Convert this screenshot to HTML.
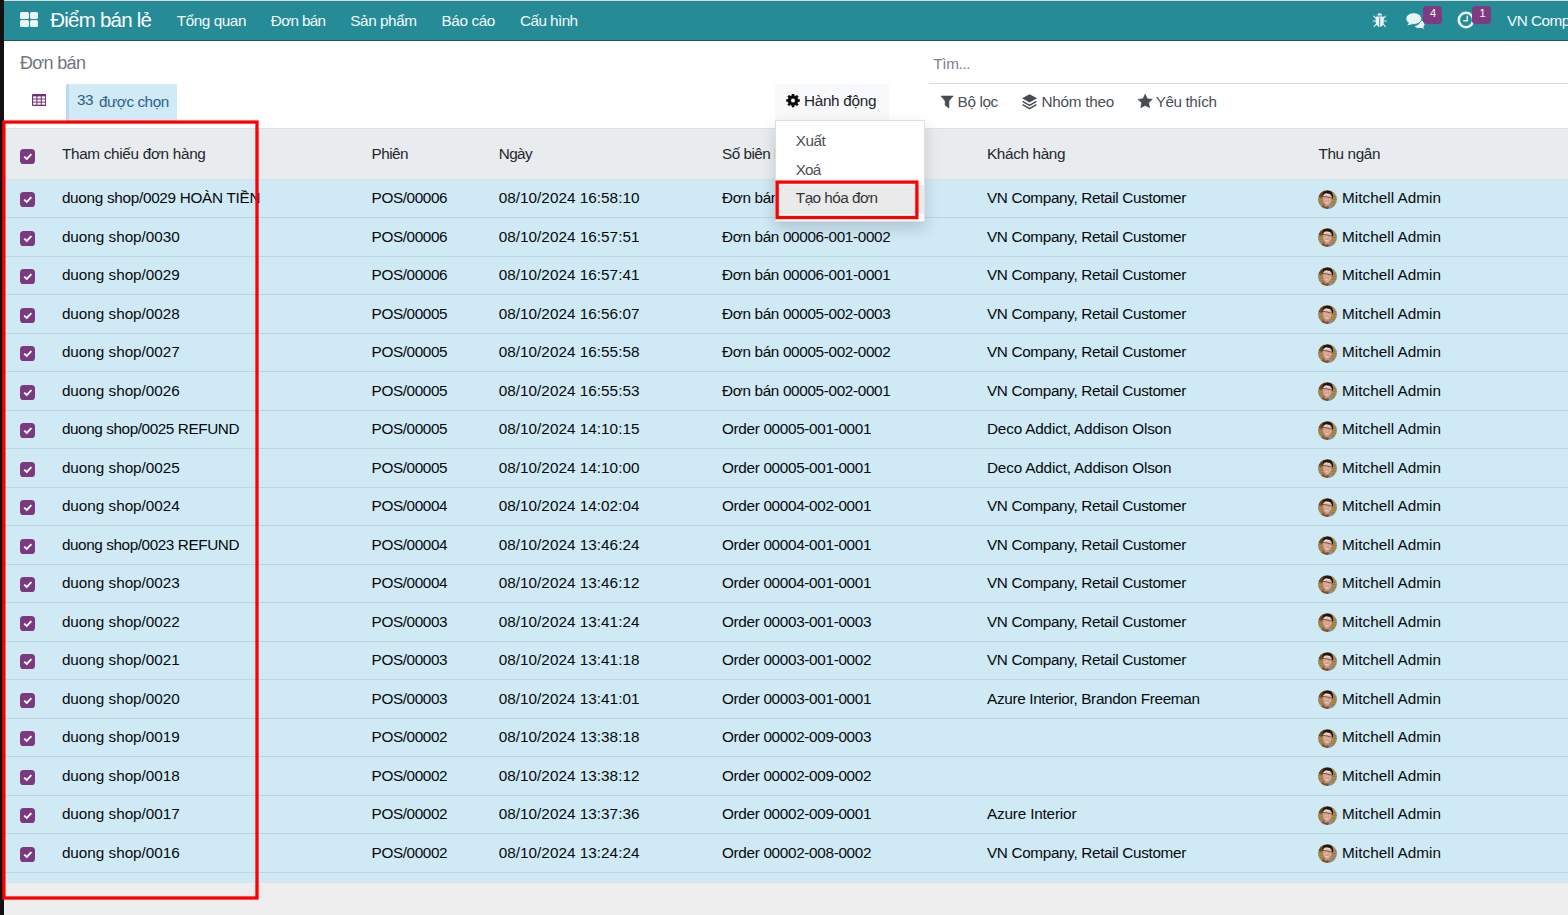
<!DOCTYPE html>
<html lang="vi"><head><meta charset="utf-8"><title>Đơn bán</title>
<style>
html,body{margin:0;padding:0;width:1568px;height:915px;overflow:hidden;background:#fff}
body{font-family:"Liberation Sans",sans-serif;position:relative}
.b{position:absolute;display:block}
.b svg{display:block}
.t{position:absolute;white-space:nowrap;line-height:1;display:block}
</style></head><body>
<div class="b" style="left:0px;top:0px;width:1568px;height:915px;background:#fff;"></div>
<div class="b" style="left:0px;top:883px;width:1568px;height:32px;background:#eeeeee;"></div>
<div class="b" style="left:0px;top:1px;width:1568px;height:39px;background:#258b97;"></div>
<div class="b" style="left:0px;top:40px;width:1568px;height:1px;background:#135c66;"></div>
<div class="b" style="left:0px;top:0px;width:1568px;height:1px;background:#dedad8;"></div>
<div class="b" style="left:20px;top:12px;width:8.5px;height:7px;background:#eaf4f5;border-radius:1.5px;"></div>
<div class="b" style="left:29.5px;top:12px;width:8.5px;height:7px;background:#eaf4f5;border-radius:1.5px;"></div>
<div class="b" style="left:20px;top:20px;width:8.5px;height:7px;background:#eaf4f5;border-radius:1.5px;"></div>
<div class="b" style="left:29.5px;top:20px;width:8.5px;height:7px;background:#eaf4f5;border-radius:1.5px;"></div>
<span class="t " style="left:50.20px;top:10.35px;font-size:20.5px;color:#fff;letter-spacing:-0.759px;">Điểm bán lẻ</span>
<span class="t " style="left:176.80px;top:12.85px;font-size:15.3px;color:#f2fafa;letter-spacing:-0.445px;">Tổng quan</span>
<span class="t " style="left:270.80px;top:12.85px;font-size:15.3px;color:#f2fafa;letter-spacing:-0.678px;">Đơn bán</span>
<span class="t " style="left:350.30px;top:12.85px;font-size:15.3px;color:#f2fafa;letter-spacing:-0.435px;">Sản phẩm</span>
<span class="t " style="left:441.50px;top:12.85px;font-size:15.3px;color:#f2fafa;letter-spacing:-0.390px;">Báo cáo</span>
<span class="t " style="left:520.00px;top:12.85px;font-size:15.3px;color:#f2fafa;letter-spacing:-0.571px;">Cấu hình</span>
<span class="t " style="left:1507.00px;top:12.95px;font-size:15.3px;color:#f2fafa;letter-spacing:-0.522px;">VN Company</span>
<span class="t " style="left:20.00px;top:53.76px;font-size:18px;color:#70767e;letter-spacing:-0.641px;">Đơn bán</span>
<span class="t " style="left:933.30px;top:56.15px;font-size:15.3px;color:#7b8189;letter-spacing:-0.359px;">Tìm...</span>
<div class="b" style="left:929px;top:83px;width:639px;height:1px;background:#d3dbe3;"></div>
<div class="b" style="left:66px;top:84px;width:111px;height:37px;background:#d0eaf6;border-left:3px solid #b9daf0;box-sizing:border-box;"></div>
<span class="t " style="left:77.10px;top:92.45px;font-size:15.3px;color:#2f5f8c;letter-spacing:-0.719px;">33</span>
<span class="t " style="left:99.00px;top:93.55px;font-size:15.3px;color:#2f5f8c;letter-spacing:-0.458px;">được chọn</span>
<div class="b" style="left:775px;top:84px;width:114px;height:36px;background:#f8f9fa;"></div>
<span class="t " style="left:803.90px;top:92.95px;font-size:15.3px;color:#1f2327;letter-spacing:-0.283px;">Hành động</span>
<span class="t " style="left:957.60px;top:93.85px;font-size:15.3px;color:#4a5056;letter-spacing:-0.385px;">Bộ lọc</span>
<span class="t " style="left:1041.40px;top:93.85px;font-size:15.3px;color:#4a5056;letter-spacing:-0.243px;">Nhóm theo</span>
<span class="t " style="left:1155.80px;top:93.85px;font-size:15.3px;color:#4a5056;letter-spacing:-0.443px;">Yêu thích</span>
<svg class="b" style="left:32px;top:94px" width="14.4" height="12" viewBox="0 0 14.4 12"><rect x="0" y="0" width="14.4" height="12" rx="1.3" fill="#722f77"/><rect x="1.10" y="2.40" width="3.3" height="2.1" fill="#fff"/><rect x="1.10" y="5.50" width="3.3" height="2.1" fill="#fff"/><rect x="1.10" y="8.60" width="3.3" height="2.1" fill="#fff"/><rect x="5.45" y="2.40" width="3.3" height="2.1" fill="#fff"/><rect x="5.45" y="5.50" width="3.3" height="2.1" fill="#fff"/><rect x="5.45" y="8.60" width="3.3" height="2.1" fill="#fff"/><rect x="9.80" y="2.40" width="3.3" height="2.1" fill="#fff"/><rect x="9.80" y="5.50" width="3.3" height="2.1" fill="#fff"/><rect x="9.80" y="8.60" width="3.3" height="2.1" fill="#fff"/></svg>
<svg class="b" style="left:786px;top:94px" width="14" height="14" viewBox="0 0 14 14"><path d="M5.83 1.64 L6.12 -0.04 L7.88 -0.04 L8.17 1.64 L9.61 2.24 L11.00 1.25 L12.25 2.50 L11.26 3.89 L11.86 5.33 L13.54 5.62 L13.54 7.38 L11.86 7.67 L11.26 9.11 L12.25 10.50 L11.00 11.75 L9.61 10.76 L8.17 11.36 L7.88 13.04 L6.12 13.04 L5.83 11.36 L4.39 10.76 L3.00 11.75 L1.75 10.50 L2.74 9.11 L2.14 7.67 L0.46 7.38 L0.46 5.62 L2.14 5.33 L2.74 3.89 L1.75 2.50 L3.00 1.25 L4.39 2.24Z M4.70 6.50 a2.3 2.3 0 1 0 4.6 0 a2.3 2.3 0 1 0 -4.6 0Z" fill="#0b0b0b" fill-rule="evenodd" stroke="#0b0b0b" stroke-width="0.6" stroke-linejoin="round"/></svg>
<svg class="b" style="left:940px;top:95px" width="14" height="14" viewBox="0 0 14 14"><path d="M1 1.1 H13.2 L8.9 5.9 V13 L5.2 10.2 V5.9 Z" fill="#474c53" stroke="#474c53" stroke-width="0.7" stroke-linejoin="round"/></svg>
<svg class="b" style="left:1021px;top:93px" width="17" height="17" viewBox="0 0 17 17"><path d="M8.5 1.2 L16 5.3 L8.5 9.6 L1 5.3 Z" fill="#474c53"/><path d="M1.6 8.4 L8.5 12.3 L15.4 8.4 M1.6 11.7 L8.5 15.6 L15.4 11.7" fill="none" stroke="#474c53" stroke-width="1.5" stroke-linejoin="miter"/></svg>
<svg class="b" style="left:1137px;top:93px" width="17" height="17" viewBox="0 0 17 17"><path d="M8.15 1.10 L10.35 5.67 L15.38 6.35 L11.72 9.86 L12.62 14.85 L8.15 12.45 L3.68 14.85 L4.58 9.86 L0.92 6.35 L5.95 5.67Z" fill="#474c53" stroke="#474c53" stroke-width="0.5" stroke-linejoin="round"/></svg>
<svg class="b" style="left:1372px;top:12px" width="16" height="17" viewBox="0 0 16 17"><path d="M5.3 3.6 A2.4 2.4 0 0 1 10.1 3.6 Z" fill="#eaf4f5"/><path d="M3.7 4.4 H11.7 V10.5 A4 4.4 0 0 1 3.7 10.5 Z" fill="#eaf4f5"/><path d="M7.7 5.5 V14.6" stroke="#258b97" stroke-width="0.9"/><path d="M3.9 6.5 L1.8 4.1 M11.5 6.5 L13.6 4.1 M3.7 9 H1.2 M11.7 9 H14.2 M4.2 12 L2.1 14.6 M11.2 12 L13.3 14.6" stroke="#eaf4f5" stroke-width="1.05" stroke-linecap="round"/></svg>
<svg class="b" style="left:1405px;top:12px" width="21" height="18" viewBox="0 0 21 18"><path d="M13.5 8.2 A6 4.2 0 0 1 19.6 12.2 Q19.6 13.9 18.2 15 L19.4 16.8 L16.2 15.9 Q12.5 16.6 9.5 14.5 Q14.5 13 15.5 9 Z" fill="#eaf4f5"/><ellipse cx="8.7" cy="6.6" rx="7.9" ry="5.9" fill="#eaf4f5" stroke="#258b97" stroke-width="0.9"/><path d="M4.2 10.6 L2.2 13.6 L7.6 11.9 Z" fill="#eaf4f5"/></svg>
<svg class="b" style="left:1457px;top:11px" width="18" height="18" viewBox="0 0 18 18"><circle cx="9" cy="9" r="7.2" fill="none" stroke="#eaf4f5" stroke-width="2.6"/><path d="M10.3 4.8 V9.8 H6.2" fill="none" stroke="#eaf4f5" stroke-width="1.5"/></svg>
<div class="b" style="left:1423.3px;top:6.4px;width:18.6px;height:17.8px;background:#7f3b81;border-radius:3.5px;"></div>
<div class="b" style="left:1472.3px;top:6.4px;width:18.6px;height:17.8px;background:#7f3b81;border-radius:3.5px;"></div>
<span class="t " style="left:1430.00px;top:7.69px;font-size:11px;color:#fff;">4</span>
<span class="t " style="left:1479.50px;top:7.69px;font-size:11px;color:#fff;">1</span>
<div class="b" style="left:0px;top:128px;width:1568px;height:52px;background:#e9ecef;border-top:1px solid #dde1e5;border-bottom:1px solid #dcdfe3;box-sizing:border-box;"></div>
<span class="t " style="left:61.90px;top:145.75px;font-size:15.3px;color:#23272b;letter-spacing:-0.307px;">Tham chiếu đơn hàng</span>
<span class="t " style="left:371.60px;top:145.75px;font-size:15.3px;color:#23272b;letter-spacing:-0.533px;">Phiên</span>
<span class="t " style="left:498.70px;top:145.75px;font-size:15.3px;color:#23272b;letter-spacing:-0.573px;">Ngày</span>
<span class="t " style="left:722.00px;top:145.75px;font-size:15.3px;color:#23272b;letter-spacing:-0.515px;">Số biên lai</span>
<span class="t " style="left:987.00px;top:145.75px;font-size:15.3px;color:#23272b;letter-spacing:-0.352px;">Khách hàng</span>
<span class="t " style="left:1318.50px;top:145.75px;font-size:15.3px;color:#23272b;letter-spacing:-0.379px;">Thu ngân</span>
<div class="b" style="left:0px;top:180px;width:1568px;height:703px;background:#cfe9f5;"></div>
<div class="b" style="left:0px;top:882px;width:1568px;height:1px;background:#dae5ec;"></div>
<div class="b" style="left:20px;top:149px;width:15px;height:15px"><svg viewBox="0 0 15 15" width="15" height="15"><rect width="15" height="15" rx="3.6" fill="#7b3a80"/><path d="M4.2 7.6 L6.8 10.0 L11.4 5.2" fill="none" stroke="#fff" stroke-width="1.9"/></svg></div>
<div class="b" style="left:0px;top:217px;width:1568px;height:1px;background:#bbd5e1;"></div>
<div class="b" style="left:20px;top:192px;width:15px;height:15px"><svg viewBox="0 0 15 15" width="15" height="15"><rect width="15" height="15" rx="3.6" fill="#7b3a80"/><path d="M4.2 7.6 L6.8 10.0 L11.4 5.2" fill="none" stroke="#fff" stroke-width="1.9"/></svg></div>
<span class="t " style="left:61.90px;top:190.15px;font-size:15.3px;color:#07090b;letter-spacing:-0.289px;">duong shop/0029 HOÀN TIỀN</span>
<span class="t " style="left:371.60px;top:190.15px;font-size:15.3px;color:#07090b;letter-spacing:-0.389px;">POS/00006</span>
<span class="t " style="left:498.70px;top:190.15px;font-size:15.3px;color:#07090b;letter-spacing:0.023px;">08/10/2024 16:58:10</span>
<span class="t " style="left:722.00px;top:190.15px;font-size:15.3px;color:#07090b;letter-spacing:-0.339px;">Đơn bán 00006-001-0001</span>
<span class="t " style="left:987.00px;top:190.15px;font-size:15.3px;color:#07090b;letter-spacing:-0.336px;">VN Company, Retail Customer</span>
<div class="b" style="left:1318px;top:190px;width:19px;height:19px"><svg viewBox="0 0 19 19" width="19" height="19"><defs><clipPath id="c0"><circle cx="9.5" cy="9.5" r="9.4"/></clipPath><filter id="f0" x="-10%" y="-10%" width="120%" height="120%"><feGaussianBlur stdDeviation="0.45"/></filter></defs><g clip-path="url(#c0)"><rect width="19" height="19" fill="#a88d5c"/><g filter="url(#f0)"><path d="M0 6 H5 M0 8.6 H4.5 M0 11.2 H5 M0 13.8 H5.5 M13.5 7 H19 M14 9.6 H19 M13.8 12.2 H19 M13 14.8 H19" stroke="#8c7143" stroke-width="0.8"/><path d="M0.5 7 Q1.5 1.5 6 0.5 L7 5 L4.2 8 Z" fill="#6a4a26"/><path d="M3 19 Q3.5 14.8 7 14 L12 14.5 L10.5 19 Z" fill="#7a5238"/><path d="M10.2 19 L11.6 15 Q15 15 16.6 17.4 L15 19 Z" fill="#8b8f97"/><path d="M6.6 12 L6.3 16.5 L11.4 16.2 L11.6 12 Z" fill="#c98f76"/><path d="M4.9 6.2 Q4.6 3 7.6 2.6 Q12.4 2.2 13.6 5.2 Q14.2 8.5 12.9 11.6 Q11.4 14.6 9.2 14.7 Q6.6 14.4 5.6 11.4 Z" fill="#dfae97"/><path d="M6.3 3.6 Q9 2.6 12 4.2 L11.8 6 Q9 4.6 6 5.8 Z" fill="#f0d3c4"/><path d="M3.9 7.4 Q3.4 9.2 4.6 10.6 L5.4 10 L5 7.2 Z" fill="#c27a62"/><path d="M4.6 6.6 Q3.6 1 9.4 0.4 Q15.4 0.2 15.2 7.6 L14.4 8.8 L13.4 5.4 Q12.6 3.4 9.4 3.4 Q6.6 3 5.4 5 Z" fill="#1f1612"/><path d="M4.2 6.3 L9 7 L14 8.4" fill="none" stroke="#54484a" stroke-width="0.85"/><path d="M5.4 7.3 h3 v1.2 h-3 Z M9.8 8 h3 v1.2 h-3 Z" fill="#c79a88" opacity="0.7"/><path d="M7.7 11.3 Q9.3 12 10.8 11.3 Q9.6 13.2 8.2 12.6 Z" fill="#fbeee8"/><path d="M7.2 11.1 Q9.2 11.8 11.2 11" fill="none" stroke="#a8564a" stroke-width="0.5"/></g></g></svg></div>
<span class="t " style="left:1342.00px;top:190.15px;font-size:15.3px;color:#07090b;letter-spacing:0.028px;">Mitchell Admin</span>
<div class="b" style="left:0px;top:256px;width:1568px;height:1px;background:#bbd5e1;"></div>
<div class="b" style="left:20px;top:231px;width:15px;height:15px"><svg viewBox="0 0 15 15" width="15" height="15"><rect width="15" height="15" rx="3.6" fill="#7b3a80"/><path d="M4.2 7.6 L6.8 10.0 L11.4 5.2" fill="none" stroke="#fff" stroke-width="1.9"/></svg></div>
<span class="t " style="left:61.90px;top:228.65px;font-size:15.3px;color:#07090b;letter-spacing:-0.026px;">duong shop/0030</span>
<span class="t " style="left:371.60px;top:228.65px;font-size:15.3px;color:#07090b;letter-spacing:-0.389px;">POS/00006</span>
<span class="t " style="left:498.70px;top:228.65px;font-size:15.3px;color:#07090b;letter-spacing:0.023px;">08/10/2024 16:57:51</span>
<span class="t " style="left:722.00px;top:228.65px;font-size:15.3px;color:#07090b;letter-spacing:-0.339px;">Đơn bán 00006-001-0002</span>
<span class="t " style="left:987.00px;top:228.65px;font-size:15.3px;color:#07090b;letter-spacing:-0.336px;">VN Company, Retail Customer</span>
<div class="b" style="left:1318px;top:228px;width:19px;height:19px"><svg viewBox="0 0 19 19" width="19" height="19"><defs><clipPath id="c1"><circle cx="9.5" cy="9.5" r="9.4"/></clipPath><filter id="f1" x="-10%" y="-10%" width="120%" height="120%"><feGaussianBlur stdDeviation="0.45"/></filter></defs><g clip-path="url(#c1)"><rect width="19" height="19" fill="#a88d5c"/><g filter="url(#f1)"><path d="M0 6 H5 M0 8.6 H4.5 M0 11.2 H5 M0 13.8 H5.5 M13.5 7 H19 M14 9.6 H19 M13.8 12.2 H19 M13 14.8 H19" stroke="#8c7143" stroke-width="0.8"/><path d="M0.5 7 Q1.5 1.5 6 0.5 L7 5 L4.2 8 Z" fill="#6a4a26"/><path d="M3 19 Q3.5 14.8 7 14 L12 14.5 L10.5 19 Z" fill="#7a5238"/><path d="M10.2 19 L11.6 15 Q15 15 16.6 17.4 L15 19 Z" fill="#8b8f97"/><path d="M6.6 12 L6.3 16.5 L11.4 16.2 L11.6 12 Z" fill="#c98f76"/><path d="M4.9 6.2 Q4.6 3 7.6 2.6 Q12.4 2.2 13.6 5.2 Q14.2 8.5 12.9 11.6 Q11.4 14.6 9.2 14.7 Q6.6 14.4 5.6 11.4 Z" fill="#dfae97"/><path d="M6.3 3.6 Q9 2.6 12 4.2 L11.8 6 Q9 4.6 6 5.8 Z" fill="#f0d3c4"/><path d="M3.9 7.4 Q3.4 9.2 4.6 10.6 L5.4 10 L5 7.2 Z" fill="#c27a62"/><path d="M4.6 6.6 Q3.6 1 9.4 0.4 Q15.4 0.2 15.2 7.6 L14.4 8.8 L13.4 5.4 Q12.6 3.4 9.4 3.4 Q6.6 3 5.4 5 Z" fill="#1f1612"/><path d="M4.2 6.3 L9 7 L14 8.4" fill="none" stroke="#54484a" stroke-width="0.85"/><path d="M5.4 7.3 h3 v1.2 h-3 Z M9.8 8 h3 v1.2 h-3 Z" fill="#c79a88" opacity="0.7"/><path d="M7.7 11.3 Q9.3 12 10.8 11.3 Q9.6 13.2 8.2 12.6 Z" fill="#fbeee8"/><path d="M7.2 11.1 Q9.2 11.8 11.2 11" fill="none" stroke="#a8564a" stroke-width="0.5"/></g></g></svg></div>
<span class="t " style="left:1342.00px;top:228.65px;font-size:15.3px;color:#07090b;letter-spacing:0.028px;">Mitchell Admin</span>
<div class="b" style="left:0px;top:294px;width:1568px;height:1px;background:#bbd5e1;"></div>
<div class="b" style="left:20px;top:269px;width:15px;height:15px"><svg viewBox="0 0 15 15" width="15" height="15"><rect width="15" height="15" rx="3.6" fill="#7b3a80"/><path d="M4.2 7.6 L6.8 10.0 L11.4 5.2" fill="none" stroke="#fff" stroke-width="1.9"/></svg></div>
<span class="t " style="left:61.90px;top:267.15px;font-size:15.3px;color:#07090b;letter-spacing:-0.026px;">duong shop/0029</span>
<span class="t " style="left:371.60px;top:267.15px;font-size:15.3px;color:#07090b;letter-spacing:-0.389px;">POS/00006</span>
<span class="t " style="left:498.70px;top:267.15px;font-size:15.3px;color:#07090b;letter-spacing:0.023px;">08/10/2024 16:57:41</span>
<span class="t " style="left:722.00px;top:267.15px;font-size:15.3px;color:#07090b;letter-spacing:-0.339px;">Đơn bán 00006-001-0001</span>
<span class="t " style="left:987.00px;top:267.15px;font-size:15.3px;color:#07090b;letter-spacing:-0.336px;">VN Company, Retail Customer</span>
<div class="b" style="left:1318px;top:267px;width:19px;height:19px"><svg viewBox="0 0 19 19" width="19" height="19"><defs><clipPath id="c2"><circle cx="9.5" cy="9.5" r="9.4"/></clipPath><filter id="f2" x="-10%" y="-10%" width="120%" height="120%"><feGaussianBlur stdDeviation="0.45"/></filter></defs><g clip-path="url(#c2)"><rect width="19" height="19" fill="#a88d5c"/><g filter="url(#f2)"><path d="M0 6 H5 M0 8.6 H4.5 M0 11.2 H5 M0 13.8 H5.5 M13.5 7 H19 M14 9.6 H19 M13.8 12.2 H19 M13 14.8 H19" stroke="#8c7143" stroke-width="0.8"/><path d="M0.5 7 Q1.5 1.5 6 0.5 L7 5 L4.2 8 Z" fill="#6a4a26"/><path d="M3 19 Q3.5 14.8 7 14 L12 14.5 L10.5 19 Z" fill="#7a5238"/><path d="M10.2 19 L11.6 15 Q15 15 16.6 17.4 L15 19 Z" fill="#8b8f97"/><path d="M6.6 12 L6.3 16.5 L11.4 16.2 L11.6 12 Z" fill="#c98f76"/><path d="M4.9 6.2 Q4.6 3 7.6 2.6 Q12.4 2.2 13.6 5.2 Q14.2 8.5 12.9 11.6 Q11.4 14.6 9.2 14.7 Q6.6 14.4 5.6 11.4 Z" fill="#dfae97"/><path d="M6.3 3.6 Q9 2.6 12 4.2 L11.8 6 Q9 4.6 6 5.8 Z" fill="#f0d3c4"/><path d="M3.9 7.4 Q3.4 9.2 4.6 10.6 L5.4 10 L5 7.2 Z" fill="#c27a62"/><path d="M4.6 6.6 Q3.6 1 9.4 0.4 Q15.4 0.2 15.2 7.6 L14.4 8.8 L13.4 5.4 Q12.6 3.4 9.4 3.4 Q6.6 3 5.4 5 Z" fill="#1f1612"/><path d="M4.2 6.3 L9 7 L14 8.4" fill="none" stroke="#54484a" stroke-width="0.85"/><path d="M5.4 7.3 h3 v1.2 h-3 Z M9.8 8 h3 v1.2 h-3 Z" fill="#c79a88" opacity="0.7"/><path d="M7.7 11.3 Q9.3 12 10.8 11.3 Q9.6 13.2 8.2 12.6 Z" fill="#fbeee8"/><path d="M7.2 11.1 Q9.2 11.8 11.2 11" fill="none" stroke="#a8564a" stroke-width="0.5"/></g></g></svg></div>
<span class="t " style="left:1342.00px;top:267.15px;font-size:15.3px;color:#07090b;letter-spacing:0.028px;">Mitchell Admin</span>
<div class="b" style="left:0px;top:333px;width:1568px;height:1px;background:#bbd5e1;"></div>
<div class="b" style="left:20px;top:308px;width:15px;height:15px"><svg viewBox="0 0 15 15" width="15" height="15"><rect width="15" height="15" rx="3.6" fill="#7b3a80"/><path d="M4.2 7.6 L6.8 10.0 L11.4 5.2" fill="none" stroke="#fff" stroke-width="1.9"/></svg></div>
<span class="t " style="left:61.90px;top:305.65px;font-size:15.3px;color:#07090b;letter-spacing:-0.026px;">duong shop/0028</span>
<span class="t " style="left:371.60px;top:305.65px;font-size:15.3px;color:#07090b;letter-spacing:-0.389px;">POS/00005</span>
<span class="t " style="left:498.70px;top:305.65px;font-size:15.3px;color:#07090b;letter-spacing:0.023px;">08/10/2024 16:56:07</span>
<span class="t " style="left:722.00px;top:305.65px;font-size:15.3px;color:#07090b;letter-spacing:-0.339px;">Đơn bán 00005-002-0003</span>
<span class="t " style="left:987.00px;top:305.65px;font-size:15.3px;color:#07090b;letter-spacing:-0.336px;">VN Company, Retail Customer</span>
<div class="b" style="left:1318px;top:305px;width:19px;height:19px"><svg viewBox="0 0 19 19" width="19" height="19"><defs><clipPath id="c3"><circle cx="9.5" cy="9.5" r="9.4"/></clipPath><filter id="f3" x="-10%" y="-10%" width="120%" height="120%"><feGaussianBlur stdDeviation="0.45"/></filter></defs><g clip-path="url(#c3)"><rect width="19" height="19" fill="#a88d5c"/><g filter="url(#f3)"><path d="M0 6 H5 M0 8.6 H4.5 M0 11.2 H5 M0 13.8 H5.5 M13.5 7 H19 M14 9.6 H19 M13.8 12.2 H19 M13 14.8 H19" stroke="#8c7143" stroke-width="0.8"/><path d="M0.5 7 Q1.5 1.5 6 0.5 L7 5 L4.2 8 Z" fill="#6a4a26"/><path d="M3 19 Q3.5 14.8 7 14 L12 14.5 L10.5 19 Z" fill="#7a5238"/><path d="M10.2 19 L11.6 15 Q15 15 16.6 17.4 L15 19 Z" fill="#8b8f97"/><path d="M6.6 12 L6.3 16.5 L11.4 16.2 L11.6 12 Z" fill="#c98f76"/><path d="M4.9 6.2 Q4.6 3 7.6 2.6 Q12.4 2.2 13.6 5.2 Q14.2 8.5 12.9 11.6 Q11.4 14.6 9.2 14.7 Q6.6 14.4 5.6 11.4 Z" fill="#dfae97"/><path d="M6.3 3.6 Q9 2.6 12 4.2 L11.8 6 Q9 4.6 6 5.8 Z" fill="#f0d3c4"/><path d="M3.9 7.4 Q3.4 9.2 4.6 10.6 L5.4 10 L5 7.2 Z" fill="#c27a62"/><path d="M4.6 6.6 Q3.6 1 9.4 0.4 Q15.4 0.2 15.2 7.6 L14.4 8.8 L13.4 5.4 Q12.6 3.4 9.4 3.4 Q6.6 3 5.4 5 Z" fill="#1f1612"/><path d="M4.2 6.3 L9 7 L14 8.4" fill="none" stroke="#54484a" stroke-width="0.85"/><path d="M5.4 7.3 h3 v1.2 h-3 Z M9.8 8 h3 v1.2 h-3 Z" fill="#c79a88" opacity="0.7"/><path d="M7.7 11.3 Q9.3 12 10.8 11.3 Q9.6 13.2 8.2 12.6 Z" fill="#fbeee8"/><path d="M7.2 11.1 Q9.2 11.8 11.2 11" fill="none" stroke="#a8564a" stroke-width="0.5"/></g></g></svg></div>
<span class="t " style="left:1342.00px;top:305.65px;font-size:15.3px;color:#07090b;letter-spacing:0.028px;">Mitchell Admin</span>
<div class="b" style="left:0px;top:371px;width:1568px;height:1px;background:#bbd5e1;"></div>
<div class="b" style="left:20px;top:346px;width:15px;height:15px"><svg viewBox="0 0 15 15" width="15" height="15"><rect width="15" height="15" rx="3.6" fill="#7b3a80"/><path d="M4.2 7.6 L6.8 10.0 L11.4 5.2" fill="none" stroke="#fff" stroke-width="1.9"/></svg></div>
<span class="t " style="left:61.90px;top:344.15px;font-size:15.3px;color:#07090b;letter-spacing:-0.026px;">duong shop/0027</span>
<span class="t " style="left:371.60px;top:344.15px;font-size:15.3px;color:#07090b;letter-spacing:-0.389px;">POS/00005</span>
<span class="t " style="left:498.70px;top:344.15px;font-size:15.3px;color:#07090b;letter-spacing:0.023px;">08/10/2024 16:55:58</span>
<span class="t " style="left:722.00px;top:344.15px;font-size:15.3px;color:#07090b;letter-spacing:-0.339px;">Đơn bán 00005-002-0002</span>
<span class="t " style="left:987.00px;top:344.15px;font-size:15.3px;color:#07090b;letter-spacing:-0.336px;">VN Company, Retail Customer</span>
<div class="b" style="left:1318px;top:344px;width:19px;height:19px"><svg viewBox="0 0 19 19" width="19" height="19"><defs><clipPath id="c4"><circle cx="9.5" cy="9.5" r="9.4"/></clipPath><filter id="f4" x="-10%" y="-10%" width="120%" height="120%"><feGaussianBlur stdDeviation="0.45"/></filter></defs><g clip-path="url(#c4)"><rect width="19" height="19" fill="#a88d5c"/><g filter="url(#f4)"><path d="M0 6 H5 M0 8.6 H4.5 M0 11.2 H5 M0 13.8 H5.5 M13.5 7 H19 M14 9.6 H19 M13.8 12.2 H19 M13 14.8 H19" stroke="#8c7143" stroke-width="0.8"/><path d="M0.5 7 Q1.5 1.5 6 0.5 L7 5 L4.2 8 Z" fill="#6a4a26"/><path d="M3 19 Q3.5 14.8 7 14 L12 14.5 L10.5 19 Z" fill="#7a5238"/><path d="M10.2 19 L11.6 15 Q15 15 16.6 17.4 L15 19 Z" fill="#8b8f97"/><path d="M6.6 12 L6.3 16.5 L11.4 16.2 L11.6 12 Z" fill="#c98f76"/><path d="M4.9 6.2 Q4.6 3 7.6 2.6 Q12.4 2.2 13.6 5.2 Q14.2 8.5 12.9 11.6 Q11.4 14.6 9.2 14.7 Q6.6 14.4 5.6 11.4 Z" fill="#dfae97"/><path d="M6.3 3.6 Q9 2.6 12 4.2 L11.8 6 Q9 4.6 6 5.8 Z" fill="#f0d3c4"/><path d="M3.9 7.4 Q3.4 9.2 4.6 10.6 L5.4 10 L5 7.2 Z" fill="#c27a62"/><path d="M4.6 6.6 Q3.6 1 9.4 0.4 Q15.4 0.2 15.2 7.6 L14.4 8.8 L13.4 5.4 Q12.6 3.4 9.4 3.4 Q6.6 3 5.4 5 Z" fill="#1f1612"/><path d="M4.2 6.3 L9 7 L14 8.4" fill="none" stroke="#54484a" stroke-width="0.85"/><path d="M5.4 7.3 h3 v1.2 h-3 Z M9.8 8 h3 v1.2 h-3 Z" fill="#c79a88" opacity="0.7"/><path d="M7.7 11.3 Q9.3 12 10.8 11.3 Q9.6 13.2 8.2 12.6 Z" fill="#fbeee8"/><path d="M7.2 11.1 Q9.2 11.8 11.2 11" fill="none" stroke="#a8564a" stroke-width="0.5"/></g></g></svg></div>
<span class="t " style="left:1342.00px;top:344.15px;font-size:15.3px;color:#07090b;letter-spacing:0.028px;">Mitchell Admin</span>
<div class="b" style="left:0px;top:410px;width:1568px;height:1px;background:#bbd5e1;"></div>
<div class="b" style="left:20px;top:385px;width:15px;height:15px"><svg viewBox="0 0 15 15" width="15" height="15"><rect width="15" height="15" rx="3.6" fill="#7b3a80"/><path d="M4.2 7.6 L6.8 10.0 L11.4 5.2" fill="none" stroke="#fff" stroke-width="1.9"/></svg></div>
<span class="t " style="left:61.90px;top:382.65px;font-size:15.3px;color:#07090b;letter-spacing:-0.026px;">duong shop/0026</span>
<span class="t " style="left:371.60px;top:382.65px;font-size:15.3px;color:#07090b;letter-spacing:-0.389px;">POS/00005</span>
<span class="t " style="left:498.70px;top:382.65px;font-size:15.3px;color:#07090b;letter-spacing:0.023px;">08/10/2024 16:55:53</span>
<span class="t " style="left:722.00px;top:382.65px;font-size:15.3px;color:#07090b;letter-spacing:-0.339px;">Đơn bán 00005-002-0001</span>
<span class="t " style="left:987.00px;top:382.65px;font-size:15.3px;color:#07090b;letter-spacing:-0.336px;">VN Company, Retail Customer</span>
<div class="b" style="left:1318px;top:382px;width:19px;height:19px"><svg viewBox="0 0 19 19" width="19" height="19"><defs><clipPath id="c5"><circle cx="9.5" cy="9.5" r="9.4"/></clipPath><filter id="f5" x="-10%" y="-10%" width="120%" height="120%"><feGaussianBlur stdDeviation="0.45"/></filter></defs><g clip-path="url(#c5)"><rect width="19" height="19" fill="#a88d5c"/><g filter="url(#f5)"><path d="M0 6 H5 M0 8.6 H4.5 M0 11.2 H5 M0 13.8 H5.5 M13.5 7 H19 M14 9.6 H19 M13.8 12.2 H19 M13 14.8 H19" stroke="#8c7143" stroke-width="0.8"/><path d="M0.5 7 Q1.5 1.5 6 0.5 L7 5 L4.2 8 Z" fill="#6a4a26"/><path d="M3 19 Q3.5 14.8 7 14 L12 14.5 L10.5 19 Z" fill="#7a5238"/><path d="M10.2 19 L11.6 15 Q15 15 16.6 17.4 L15 19 Z" fill="#8b8f97"/><path d="M6.6 12 L6.3 16.5 L11.4 16.2 L11.6 12 Z" fill="#c98f76"/><path d="M4.9 6.2 Q4.6 3 7.6 2.6 Q12.4 2.2 13.6 5.2 Q14.2 8.5 12.9 11.6 Q11.4 14.6 9.2 14.7 Q6.6 14.4 5.6 11.4 Z" fill="#dfae97"/><path d="M6.3 3.6 Q9 2.6 12 4.2 L11.8 6 Q9 4.6 6 5.8 Z" fill="#f0d3c4"/><path d="M3.9 7.4 Q3.4 9.2 4.6 10.6 L5.4 10 L5 7.2 Z" fill="#c27a62"/><path d="M4.6 6.6 Q3.6 1 9.4 0.4 Q15.4 0.2 15.2 7.6 L14.4 8.8 L13.4 5.4 Q12.6 3.4 9.4 3.4 Q6.6 3 5.4 5 Z" fill="#1f1612"/><path d="M4.2 6.3 L9 7 L14 8.4" fill="none" stroke="#54484a" stroke-width="0.85"/><path d="M5.4 7.3 h3 v1.2 h-3 Z M9.8 8 h3 v1.2 h-3 Z" fill="#c79a88" opacity="0.7"/><path d="M7.7 11.3 Q9.3 12 10.8 11.3 Q9.6 13.2 8.2 12.6 Z" fill="#fbeee8"/><path d="M7.2 11.1 Q9.2 11.8 11.2 11" fill="none" stroke="#a8564a" stroke-width="0.5"/></g></g></svg></div>
<span class="t " style="left:1342.00px;top:382.65px;font-size:15.3px;color:#07090b;letter-spacing:0.028px;">Mitchell Admin</span>
<div class="b" style="left:0px;top:448px;width:1568px;height:1px;background:#bbd5e1;"></div>
<div class="b" style="left:20px;top:423px;width:15px;height:15px"><svg viewBox="0 0 15 15" width="15" height="15"><rect width="15" height="15" rx="3.6" fill="#7b3a80"/><path d="M4.2 7.6 L6.8 10.0 L11.4 5.2" fill="none" stroke="#fff" stroke-width="1.9"/></svg></div>
<span class="t " style="left:61.90px;top:421.15px;font-size:15.3px;color:#07090b;letter-spacing:-0.412px;">duong shop/0025 REFUND</span>
<span class="t " style="left:371.60px;top:421.15px;font-size:15.3px;color:#07090b;letter-spacing:-0.389px;">POS/00005</span>
<span class="t " style="left:498.70px;top:421.15px;font-size:15.3px;color:#07090b;letter-spacing:0.023px;">08/10/2024 14:10:15</span>
<span class="t " style="left:722.00px;top:421.15px;font-size:15.3px;color:#07090b;letter-spacing:-0.324px;">Order 00005-001-0001</span>
<span class="t " style="left:987.00px;top:421.15px;font-size:15.3px;color:#07090b;letter-spacing:-0.173px;">Deco Addict, Addison Olson</span>
<div class="b" style="left:1318px;top:421px;width:19px;height:19px"><svg viewBox="0 0 19 19" width="19" height="19"><defs><clipPath id="c6"><circle cx="9.5" cy="9.5" r="9.4"/></clipPath><filter id="f6" x="-10%" y="-10%" width="120%" height="120%"><feGaussianBlur stdDeviation="0.45"/></filter></defs><g clip-path="url(#c6)"><rect width="19" height="19" fill="#a88d5c"/><g filter="url(#f6)"><path d="M0 6 H5 M0 8.6 H4.5 M0 11.2 H5 M0 13.8 H5.5 M13.5 7 H19 M14 9.6 H19 M13.8 12.2 H19 M13 14.8 H19" stroke="#8c7143" stroke-width="0.8"/><path d="M0.5 7 Q1.5 1.5 6 0.5 L7 5 L4.2 8 Z" fill="#6a4a26"/><path d="M3 19 Q3.5 14.8 7 14 L12 14.5 L10.5 19 Z" fill="#7a5238"/><path d="M10.2 19 L11.6 15 Q15 15 16.6 17.4 L15 19 Z" fill="#8b8f97"/><path d="M6.6 12 L6.3 16.5 L11.4 16.2 L11.6 12 Z" fill="#c98f76"/><path d="M4.9 6.2 Q4.6 3 7.6 2.6 Q12.4 2.2 13.6 5.2 Q14.2 8.5 12.9 11.6 Q11.4 14.6 9.2 14.7 Q6.6 14.4 5.6 11.4 Z" fill="#dfae97"/><path d="M6.3 3.6 Q9 2.6 12 4.2 L11.8 6 Q9 4.6 6 5.8 Z" fill="#f0d3c4"/><path d="M3.9 7.4 Q3.4 9.2 4.6 10.6 L5.4 10 L5 7.2 Z" fill="#c27a62"/><path d="M4.6 6.6 Q3.6 1 9.4 0.4 Q15.4 0.2 15.2 7.6 L14.4 8.8 L13.4 5.4 Q12.6 3.4 9.4 3.4 Q6.6 3 5.4 5 Z" fill="#1f1612"/><path d="M4.2 6.3 L9 7 L14 8.4" fill="none" stroke="#54484a" stroke-width="0.85"/><path d="M5.4 7.3 h3 v1.2 h-3 Z M9.8 8 h3 v1.2 h-3 Z" fill="#c79a88" opacity="0.7"/><path d="M7.7 11.3 Q9.3 12 10.8 11.3 Q9.6 13.2 8.2 12.6 Z" fill="#fbeee8"/><path d="M7.2 11.1 Q9.2 11.8 11.2 11" fill="none" stroke="#a8564a" stroke-width="0.5"/></g></g></svg></div>
<span class="t " style="left:1342.00px;top:421.15px;font-size:15.3px;color:#07090b;letter-spacing:0.028px;">Mitchell Admin</span>
<div class="b" style="left:0px;top:487px;width:1568px;height:1px;background:#bbd5e1;"></div>
<div class="b" style="left:20px;top:462px;width:15px;height:15px"><svg viewBox="0 0 15 15" width="15" height="15"><rect width="15" height="15" rx="3.6" fill="#7b3a80"/><path d="M4.2 7.6 L6.8 10.0 L11.4 5.2" fill="none" stroke="#fff" stroke-width="1.9"/></svg></div>
<span class="t " style="left:61.90px;top:459.65px;font-size:15.3px;color:#07090b;letter-spacing:-0.026px;">duong shop/0025</span>
<span class="t " style="left:371.60px;top:459.65px;font-size:15.3px;color:#07090b;letter-spacing:-0.389px;">POS/00005</span>
<span class="t " style="left:498.70px;top:459.65px;font-size:15.3px;color:#07090b;letter-spacing:0.023px;">08/10/2024 14:10:00</span>
<span class="t " style="left:722.00px;top:459.65px;font-size:15.3px;color:#07090b;letter-spacing:-0.324px;">Order 00005-001-0001</span>
<span class="t " style="left:987.00px;top:459.65px;font-size:15.3px;color:#07090b;letter-spacing:-0.173px;">Deco Addict, Addison Olson</span>
<div class="b" style="left:1318px;top:459px;width:19px;height:19px"><svg viewBox="0 0 19 19" width="19" height="19"><defs><clipPath id="c7"><circle cx="9.5" cy="9.5" r="9.4"/></clipPath><filter id="f7" x="-10%" y="-10%" width="120%" height="120%"><feGaussianBlur stdDeviation="0.45"/></filter></defs><g clip-path="url(#c7)"><rect width="19" height="19" fill="#a88d5c"/><g filter="url(#f7)"><path d="M0 6 H5 M0 8.6 H4.5 M0 11.2 H5 M0 13.8 H5.5 M13.5 7 H19 M14 9.6 H19 M13.8 12.2 H19 M13 14.8 H19" stroke="#8c7143" stroke-width="0.8"/><path d="M0.5 7 Q1.5 1.5 6 0.5 L7 5 L4.2 8 Z" fill="#6a4a26"/><path d="M3 19 Q3.5 14.8 7 14 L12 14.5 L10.5 19 Z" fill="#7a5238"/><path d="M10.2 19 L11.6 15 Q15 15 16.6 17.4 L15 19 Z" fill="#8b8f97"/><path d="M6.6 12 L6.3 16.5 L11.4 16.2 L11.6 12 Z" fill="#c98f76"/><path d="M4.9 6.2 Q4.6 3 7.6 2.6 Q12.4 2.2 13.6 5.2 Q14.2 8.5 12.9 11.6 Q11.4 14.6 9.2 14.7 Q6.6 14.4 5.6 11.4 Z" fill="#dfae97"/><path d="M6.3 3.6 Q9 2.6 12 4.2 L11.8 6 Q9 4.6 6 5.8 Z" fill="#f0d3c4"/><path d="M3.9 7.4 Q3.4 9.2 4.6 10.6 L5.4 10 L5 7.2 Z" fill="#c27a62"/><path d="M4.6 6.6 Q3.6 1 9.4 0.4 Q15.4 0.2 15.2 7.6 L14.4 8.8 L13.4 5.4 Q12.6 3.4 9.4 3.4 Q6.6 3 5.4 5 Z" fill="#1f1612"/><path d="M4.2 6.3 L9 7 L14 8.4" fill="none" stroke="#54484a" stroke-width="0.85"/><path d="M5.4 7.3 h3 v1.2 h-3 Z M9.8 8 h3 v1.2 h-3 Z" fill="#c79a88" opacity="0.7"/><path d="M7.7 11.3 Q9.3 12 10.8 11.3 Q9.6 13.2 8.2 12.6 Z" fill="#fbeee8"/><path d="M7.2 11.1 Q9.2 11.8 11.2 11" fill="none" stroke="#a8564a" stroke-width="0.5"/></g></g></svg></div>
<span class="t " style="left:1342.00px;top:459.65px;font-size:15.3px;color:#07090b;letter-spacing:0.028px;">Mitchell Admin</span>
<div class="b" style="left:0px;top:525px;width:1568px;height:1px;background:#bbd5e1;"></div>
<div class="b" style="left:20px;top:500px;width:15px;height:15px"><svg viewBox="0 0 15 15" width="15" height="15"><rect width="15" height="15" rx="3.6" fill="#7b3a80"/><path d="M4.2 7.6 L6.8 10.0 L11.4 5.2" fill="none" stroke="#fff" stroke-width="1.9"/></svg></div>
<span class="t " style="left:61.90px;top:498.15px;font-size:15.3px;color:#07090b;letter-spacing:-0.026px;">duong shop/0024</span>
<span class="t " style="left:371.60px;top:498.15px;font-size:15.3px;color:#07090b;letter-spacing:-0.389px;">POS/00004</span>
<span class="t " style="left:498.70px;top:498.15px;font-size:15.3px;color:#07090b;letter-spacing:0.023px;">08/10/2024 14:02:04</span>
<span class="t " style="left:722.00px;top:498.15px;font-size:15.3px;color:#07090b;letter-spacing:-0.324px;">Order 00004-002-0001</span>
<span class="t " style="left:987.00px;top:498.15px;font-size:15.3px;color:#07090b;letter-spacing:-0.336px;">VN Company, Retail Customer</span>
<div class="b" style="left:1318px;top:498px;width:19px;height:19px"><svg viewBox="0 0 19 19" width="19" height="19"><defs><clipPath id="c8"><circle cx="9.5" cy="9.5" r="9.4"/></clipPath><filter id="f8" x="-10%" y="-10%" width="120%" height="120%"><feGaussianBlur stdDeviation="0.45"/></filter></defs><g clip-path="url(#c8)"><rect width="19" height="19" fill="#a88d5c"/><g filter="url(#f8)"><path d="M0 6 H5 M0 8.6 H4.5 M0 11.2 H5 M0 13.8 H5.5 M13.5 7 H19 M14 9.6 H19 M13.8 12.2 H19 M13 14.8 H19" stroke="#8c7143" stroke-width="0.8"/><path d="M0.5 7 Q1.5 1.5 6 0.5 L7 5 L4.2 8 Z" fill="#6a4a26"/><path d="M3 19 Q3.5 14.8 7 14 L12 14.5 L10.5 19 Z" fill="#7a5238"/><path d="M10.2 19 L11.6 15 Q15 15 16.6 17.4 L15 19 Z" fill="#8b8f97"/><path d="M6.6 12 L6.3 16.5 L11.4 16.2 L11.6 12 Z" fill="#c98f76"/><path d="M4.9 6.2 Q4.6 3 7.6 2.6 Q12.4 2.2 13.6 5.2 Q14.2 8.5 12.9 11.6 Q11.4 14.6 9.2 14.7 Q6.6 14.4 5.6 11.4 Z" fill="#dfae97"/><path d="M6.3 3.6 Q9 2.6 12 4.2 L11.8 6 Q9 4.6 6 5.8 Z" fill="#f0d3c4"/><path d="M3.9 7.4 Q3.4 9.2 4.6 10.6 L5.4 10 L5 7.2 Z" fill="#c27a62"/><path d="M4.6 6.6 Q3.6 1 9.4 0.4 Q15.4 0.2 15.2 7.6 L14.4 8.8 L13.4 5.4 Q12.6 3.4 9.4 3.4 Q6.6 3 5.4 5 Z" fill="#1f1612"/><path d="M4.2 6.3 L9 7 L14 8.4" fill="none" stroke="#54484a" stroke-width="0.85"/><path d="M5.4 7.3 h3 v1.2 h-3 Z M9.8 8 h3 v1.2 h-3 Z" fill="#c79a88" opacity="0.7"/><path d="M7.7 11.3 Q9.3 12 10.8 11.3 Q9.6 13.2 8.2 12.6 Z" fill="#fbeee8"/><path d="M7.2 11.1 Q9.2 11.8 11.2 11" fill="none" stroke="#a8564a" stroke-width="0.5"/></g></g></svg></div>
<span class="t " style="left:1342.00px;top:498.15px;font-size:15.3px;color:#07090b;letter-spacing:0.028px;">Mitchell Admin</span>
<div class="b" style="left:0px;top:564px;width:1568px;height:1px;background:#bbd5e1;"></div>
<div class="b" style="left:20px;top:539px;width:15px;height:15px"><svg viewBox="0 0 15 15" width="15" height="15"><rect width="15" height="15" rx="3.6" fill="#7b3a80"/><path d="M4.2 7.6 L6.8 10.0 L11.4 5.2" fill="none" stroke="#fff" stroke-width="1.9"/></svg></div>
<span class="t " style="left:61.90px;top:536.65px;font-size:15.3px;color:#07090b;letter-spacing:-0.412px;">duong shop/0023 REFUND</span>
<span class="t " style="left:371.60px;top:536.65px;font-size:15.3px;color:#07090b;letter-spacing:-0.389px;">POS/00004</span>
<span class="t " style="left:498.70px;top:536.65px;font-size:15.3px;color:#07090b;letter-spacing:0.023px;">08/10/2024 13:46:24</span>
<span class="t " style="left:722.00px;top:536.65px;font-size:15.3px;color:#07090b;letter-spacing:-0.324px;">Order 00004-001-0001</span>
<span class="t " style="left:987.00px;top:536.65px;font-size:15.3px;color:#07090b;letter-spacing:-0.336px;">VN Company, Retail Customer</span>
<div class="b" style="left:1318px;top:536px;width:19px;height:19px"><svg viewBox="0 0 19 19" width="19" height="19"><defs><clipPath id="c9"><circle cx="9.5" cy="9.5" r="9.4"/></clipPath><filter id="f9" x="-10%" y="-10%" width="120%" height="120%"><feGaussianBlur stdDeviation="0.45"/></filter></defs><g clip-path="url(#c9)"><rect width="19" height="19" fill="#a88d5c"/><g filter="url(#f9)"><path d="M0 6 H5 M0 8.6 H4.5 M0 11.2 H5 M0 13.8 H5.5 M13.5 7 H19 M14 9.6 H19 M13.8 12.2 H19 M13 14.8 H19" stroke="#8c7143" stroke-width="0.8"/><path d="M0.5 7 Q1.5 1.5 6 0.5 L7 5 L4.2 8 Z" fill="#6a4a26"/><path d="M3 19 Q3.5 14.8 7 14 L12 14.5 L10.5 19 Z" fill="#7a5238"/><path d="M10.2 19 L11.6 15 Q15 15 16.6 17.4 L15 19 Z" fill="#8b8f97"/><path d="M6.6 12 L6.3 16.5 L11.4 16.2 L11.6 12 Z" fill="#c98f76"/><path d="M4.9 6.2 Q4.6 3 7.6 2.6 Q12.4 2.2 13.6 5.2 Q14.2 8.5 12.9 11.6 Q11.4 14.6 9.2 14.7 Q6.6 14.4 5.6 11.4 Z" fill="#dfae97"/><path d="M6.3 3.6 Q9 2.6 12 4.2 L11.8 6 Q9 4.6 6 5.8 Z" fill="#f0d3c4"/><path d="M3.9 7.4 Q3.4 9.2 4.6 10.6 L5.4 10 L5 7.2 Z" fill="#c27a62"/><path d="M4.6 6.6 Q3.6 1 9.4 0.4 Q15.4 0.2 15.2 7.6 L14.4 8.8 L13.4 5.4 Q12.6 3.4 9.4 3.4 Q6.6 3 5.4 5 Z" fill="#1f1612"/><path d="M4.2 6.3 L9 7 L14 8.4" fill="none" stroke="#54484a" stroke-width="0.85"/><path d="M5.4 7.3 h3 v1.2 h-3 Z M9.8 8 h3 v1.2 h-3 Z" fill="#c79a88" opacity="0.7"/><path d="M7.7 11.3 Q9.3 12 10.8 11.3 Q9.6 13.2 8.2 12.6 Z" fill="#fbeee8"/><path d="M7.2 11.1 Q9.2 11.8 11.2 11" fill="none" stroke="#a8564a" stroke-width="0.5"/></g></g></svg></div>
<span class="t " style="left:1342.00px;top:536.65px;font-size:15.3px;color:#07090b;letter-spacing:0.028px;">Mitchell Admin</span>
<div class="b" style="left:0px;top:602px;width:1568px;height:1px;background:#bbd5e1;"></div>
<div class="b" style="left:20px;top:577px;width:15px;height:15px"><svg viewBox="0 0 15 15" width="15" height="15"><rect width="15" height="15" rx="3.6" fill="#7b3a80"/><path d="M4.2 7.6 L6.8 10.0 L11.4 5.2" fill="none" stroke="#fff" stroke-width="1.9"/></svg></div>
<span class="t " style="left:61.90px;top:575.15px;font-size:15.3px;color:#07090b;letter-spacing:-0.026px;">duong shop/0023</span>
<span class="t " style="left:371.60px;top:575.15px;font-size:15.3px;color:#07090b;letter-spacing:-0.389px;">POS/00004</span>
<span class="t " style="left:498.70px;top:575.15px;font-size:15.3px;color:#07090b;letter-spacing:0.023px;">08/10/2024 13:46:12</span>
<span class="t " style="left:722.00px;top:575.15px;font-size:15.3px;color:#07090b;letter-spacing:-0.324px;">Order 00004-001-0001</span>
<span class="t " style="left:987.00px;top:575.15px;font-size:15.3px;color:#07090b;letter-spacing:-0.336px;">VN Company, Retail Customer</span>
<div class="b" style="left:1318px;top:575px;width:19px;height:19px"><svg viewBox="0 0 19 19" width="19" height="19"><defs><clipPath id="c10"><circle cx="9.5" cy="9.5" r="9.4"/></clipPath><filter id="f10" x="-10%" y="-10%" width="120%" height="120%"><feGaussianBlur stdDeviation="0.45"/></filter></defs><g clip-path="url(#c10)"><rect width="19" height="19" fill="#a88d5c"/><g filter="url(#f10)"><path d="M0 6 H5 M0 8.6 H4.5 M0 11.2 H5 M0 13.8 H5.5 M13.5 7 H19 M14 9.6 H19 M13.8 12.2 H19 M13 14.8 H19" stroke="#8c7143" stroke-width="0.8"/><path d="M0.5 7 Q1.5 1.5 6 0.5 L7 5 L4.2 8 Z" fill="#6a4a26"/><path d="M3 19 Q3.5 14.8 7 14 L12 14.5 L10.5 19 Z" fill="#7a5238"/><path d="M10.2 19 L11.6 15 Q15 15 16.6 17.4 L15 19 Z" fill="#8b8f97"/><path d="M6.6 12 L6.3 16.5 L11.4 16.2 L11.6 12 Z" fill="#c98f76"/><path d="M4.9 6.2 Q4.6 3 7.6 2.6 Q12.4 2.2 13.6 5.2 Q14.2 8.5 12.9 11.6 Q11.4 14.6 9.2 14.7 Q6.6 14.4 5.6 11.4 Z" fill="#dfae97"/><path d="M6.3 3.6 Q9 2.6 12 4.2 L11.8 6 Q9 4.6 6 5.8 Z" fill="#f0d3c4"/><path d="M3.9 7.4 Q3.4 9.2 4.6 10.6 L5.4 10 L5 7.2 Z" fill="#c27a62"/><path d="M4.6 6.6 Q3.6 1 9.4 0.4 Q15.4 0.2 15.2 7.6 L14.4 8.8 L13.4 5.4 Q12.6 3.4 9.4 3.4 Q6.6 3 5.4 5 Z" fill="#1f1612"/><path d="M4.2 6.3 L9 7 L14 8.4" fill="none" stroke="#54484a" stroke-width="0.85"/><path d="M5.4 7.3 h3 v1.2 h-3 Z M9.8 8 h3 v1.2 h-3 Z" fill="#c79a88" opacity="0.7"/><path d="M7.7 11.3 Q9.3 12 10.8 11.3 Q9.6 13.2 8.2 12.6 Z" fill="#fbeee8"/><path d="M7.2 11.1 Q9.2 11.8 11.2 11" fill="none" stroke="#a8564a" stroke-width="0.5"/></g></g></svg></div>
<span class="t " style="left:1342.00px;top:575.15px;font-size:15.3px;color:#07090b;letter-spacing:0.028px;">Mitchell Admin</span>
<div class="b" style="left:0px;top:641px;width:1568px;height:1px;background:#bbd5e1;"></div>
<div class="b" style="left:20px;top:616px;width:15px;height:15px"><svg viewBox="0 0 15 15" width="15" height="15"><rect width="15" height="15" rx="3.6" fill="#7b3a80"/><path d="M4.2 7.6 L6.8 10.0 L11.4 5.2" fill="none" stroke="#fff" stroke-width="1.9"/></svg></div>
<span class="t " style="left:61.90px;top:613.65px;font-size:15.3px;color:#07090b;letter-spacing:-0.026px;">duong shop/0022</span>
<span class="t " style="left:371.60px;top:613.65px;font-size:15.3px;color:#07090b;letter-spacing:-0.389px;">POS/00003</span>
<span class="t " style="left:498.70px;top:613.65px;font-size:15.3px;color:#07090b;letter-spacing:0.023px;">08/10/2024 13:41:24</span>
<span class="t " style="left:722.00px;top:613.65px;font-size:15.3px;color:#07090b;letter-spacing:-0.324px;">Order 00003-001-0003</span>
<span class="t " style="left:987.00px;top:613.65px;font-size:15.3px;color:#07090b;letter-spacing:-0.336px;">VN Company, Retail Customer</span>
<div class="b" style="left:1318px;top:613px;width:19px;height:19px"><svg viewBox="0 0 19 19" width="19" height="19"><defs><clipPath id="c11"><circle cx="9.5" cy="9.5" r="9.4"/></clipPath><filter id="f11" x="-10%" y="-10%" width="120%" height="120%"><feGaussianBlur stdDeviation="0.45"/></filter></defs><g clip-path="url(#c11)"><rect width="19" height="19" fill="#a88d5c"/><g filter="url(#f11)"><path d="M0 6 H5 M0 8.6 H4.5 M0 11.2 H5 M0 13.8 H5.5 M13.5 7 H19 M14 9.6 H19 M13.8 12.2 H19 M13 14.8 H19" stroke="#8c7143" stroke-width="0.8"/><path d="M0.5 7 Q1.5 1.5 6 0.5 L7 5 L4.2 8 Z" fill="#6a4a26"/><path d="M3 19 Q3.5 14.8 7 14 L12 14.5 L10.5 19 Z" fill="#7a5238"/><path d="M10.2 19 L11.6 15 Q15 15 16.6 17.4 L15 19 Z" fill="#8b8f97"/><path d="M6.6 12 L6.3 16.5 L11.4 16.2 L11.6 12 Z" fill="#c98f76"/><path d="M4.9 6.2 Q4.6 3 7.6 2.6 Q12.4 2.2 13.6 5.2 Q14.2 8.5 12.9 11.6 Q11.4 14.6 9.2 14.7 Q6.6 14.4 5.6 11.4 Z" fill="#dfae97"/><path d="M6.3 3.6 Q9 2.6 12 4.2 L11.8 6 Q9 4.6 6 5.8 Z" fill="#f0d3c4"/><path d="M3.9 7.4 Q3.4 9.2 4.6 10.6 L5.4 10 L5 7.2 Z" fill="#c27a62"/><path d="M4.6 6.6 Q3.6 1 9.4 0.4 Q15.4 0.2 15.2 7.6 L14.4 8.8 L13.4 5.4 Q12.6 3.4 9.4 3.4 Q6.6 3 5.4 5 Z" fill="#1f1612"/><path d="M4.2 6.3 L9 7 L14 8.4" fill="none" stroke="#54484a" stroke-width="0.85"/><path d="M5.4 7.3 h3 v1.2 h-3 Z M9.8 8 h3 v1.2 h-3 Z" fill="#c79a88" opacity="0.7"/><path d="M7.7 11.3 Q9.3 12 10.8 11.3 Q9.6 13.2 8.2 12.6 Z" fill="#fbeee8"/><path d="M7.2 11.1 Q9.2 11.8 11.2 11" fill="none" stroke="#a8564a" stroke-width="0.5"/></g></g></svg></div>
<span class="t " style="left:1342.00px;top:613.65px;font-size:15.3px;color:#07090b;letter-spacing:0.028px;">Mitchell Admin</span>
<div class="b" style="left:0px;top:679px;width:1568px;height:1px;background:#bbd5e1;"></div>
<div class="b" style="left:20px;top:654px;width:15px;height:15px"><svg viewBox="0 0 15 15" width="15" height="15"><rect width="15" height="15" rx="3.6" fill="#7b3a80"/><path d="M4.2 7.6 L6.8 10.0 L11.4 5.2" fill="none" stroke="#fff" stroke-width="1.9"/></svg></div>
<span class="t " style="left:61.90px;top:652.15px;font-size:15.3px;color:#07090b;letter-spacing:-0.026px;">duong shop/0021</span>
<span class="t " style="left:371.60px;top:652.15px;font-size:15.3px;color:#07090b;letter-spacing:-0.389px;">POS/00003</span>
<span class="t " style="left:498.70px;top:652.15px;font-size:15.3px;color:#07090b;letter-spacing:0.023px;">08/10/2024 13:41:18</span>
<span class="t " style="left:722.00px;top:652.15px;font-size:15.3px;color:#07090b;letter-spacing:-0.324px;">Order 00003-001-0002</span>
<span class="t " style="left:987.00px;top:652.15px;font-size:15.3px;color:#07090b;letter-spacing:-0.336px;">VN Company, Retail Customer</span>
<div class="b" style="left:1318px;top:652px;width:19px;height:19px"><svg viewBox="0 0 19 19" width="19" height="19"><defs><clipPath id="c12"><circle cx="9.5" cy="9.5" r="9.4"/></clipPath><filter id="f12" x="-10%" y="-10%" width="120%" height="120%"><feGaussianBlur stdDeviation="0.45"/></filter></defs><g clip-path="url(#c12)"><rect width="19" height="19" fill="#a88d5c"/><g filter="url(#f12)"><path d="M0 6 H5 M0 8.6 H4.5 M0 11.2 H5 M0 13.8 H5.5 M13.5 7 H19 M14 9.6 H19 M13.8 12.2 H19 M13 14.8 H19" stroke="#8c7143" stroke-width="0.8"/><path d="M0.5 7 Q1.5 1.5 6 0.5 L7 5 L4.2 8 Z" fill="#6a4a26"/><path d="M3 19 Q3.5 14.8 7 14 L12 14.5 L10.5 19 Z" fill="#7a5238"/><path d="M10.2 19 L11.6 15 Q15 15 16.6 17.4 L15 19 Z" fill="#8b8f97"/><path d="M6.6 12 L6.3 16.5 L11.4 16.2 L11.6 12 Z" fill="#c98f76"/><path d="M4.9 6.2 Q4.6 3 7.6 2.6 Q12.4 2.2 13.6 5.2 Q14.2 8.5 12.9 11.6 Q11.4 14.6 9.2 14.7 Q6.6 14.4 5.6 11.4 Z" fill="#dfae97"/><path d="M6.3 3.6 Q9 2.6 12 4.2 L11.8 6 Q9 4.6 6 5.8 Z" fill="#f0d3c4"/><path d="M3.9 7.4 Q3.4 9.2 4.6 10.6 L5.4 10 L5 7.2 Z" fill="#c27a62"/><path d="M4.6 6.6 Q3.6 1 9.4 0.4 Q15.4 0.2 15.2 7.6 L14.4 8.8 L13.4 5.4 Q12.6 3.4 9.4 3.4 Q6.6 3 5.4 5 Z" fill="#1f1612"/><path d="M4.2 6.3 L9 7 L14 8.4" fill="none" stroke="#54484a" stroke-width="0.85"/><path d="M5.4 7.3 h3 v1.2 h-3 Z M9.8 8 h3 v1.2 h-3 Z" fill="#c79a88" opacity="0.7"/><path d="M7.7 11.3 Q9.3 12 10.8 11.3 Q9.6 13.2 8.2 12.6 Z" fill="#fbeee8"/><path d="M7.2 11.1 Q9.2 11.8 11.2 11" fill="none" stroke="#a8564a" stroke-width="0.5"/></g></g></svg></div>
<span class="t " style="left:1342.00px;top:652.15px;font-size:15.3px;color:#07090b;letter-spacing:0.028px;">Mitchell Admin</span>
<div class="b" style="left:0px;top:718px;width:1568px;height:1px;background:#bbd5e1;"></div>
<div class="b" style="left:20px;top:693px;width:15px;height:15px"><svg viewBox="0 0 15 15" width="15" height="15"><rect width="15" height="15" rx="3.6" fill="#7b3a80"/><path d="M4.2 7.6 L6.8 10.0 L11.4 5.2" fill="none" stroke="#fff" stroke-width="1.9"/></svg></div>
<span class="t " style="left:61.90px;top:690.65px;font-size:15.3px;color:#07090b;letter-spacing:-0.026px;">duong shop/0020</span>
<span class="t " style="left:371.60px;top:690.65px;font-size:15.3px;color:#07090b;letter-spacing:-0.389px;">POS/00003</span>
<span class="t " style="left:498.70px;top:690.65px;font-size:15.3px;color:#07090b;letter-spacing:0.023px;">08/10/2024 13:41:01</span>
<span class="t " style="left:722.00px;top:690.65px;font-size:15.3px;color:#07090b;letter-spacing:-0.324px;">Order 00003-001-0001</span>
<span class="t " style="left:987.00px;top:690.65px;font-size:15.3px;color:#07090b;letter-spacing:-0.327px;">Azure Interior, Brandon Freeman</span>
<div class="b" style="left:1318px;top:690px;width:19px;height:19px"><svg viewBox="0 0 19 19" width="19" height="19"><defs><clipPath id="c13"><circle cx="9.5" cy="9.5" r="9.4"/></clipPath><filter id="f13" x="-10%" y="-10%" width="120%" height="120%"><feGaussianBlur stdDeviation="0.45"/></filter></defs><g clip-path="url(#c13)"><rect width="19" height="19" fill="#a88d5c"/><g filter="url(#f13)"><path d="M0 6 H5 M0 8.6 H4.5 M0 11.2 H5 M0 13.8 H5.5 M13.5 7 H19 M14 9.6 H19 M13.8 12.2 H19 M13 14.8 H19" stroke="#8c7143" stroke-width="0.8"/><path d="M0.5 7 Q1.5 1.5 6 0.5 L7 5 L4.2 8 Z" fill="#6a4a26"/><path d="M3 19 Q3.5 14.8 7 14 L12 14.5 L10.5 19 Z" fill="#7a5238"/><path d="M10.2 19 L11.6 15 Q15 15 16.6 17.4 L15 19 Z" fill="#8b8f97"/><path d="M6.6 12 L6.3 16.5 L11.4 16.2 L11.6 12 Z" fill="#c98f76"/><path d="M4.9 6.2 Q4.6 3 7.6 2.6 Q12.4 2.2 13.6 5.2 Q14.2 8.5 12.9 11.6 Q11.4 14.6 9.2 14.7 Q6.6 14.4 5.6 11.4 Z" fill="#dfae97"/><path d="M6.3 3.6 Q9 2.6 12 4.2 L11.8 6 Q9 4.6 6 5.8 Z" fill="#f0d3c4"/><path d="M3.9 7.4 Q3.4 9.2 4.6 10.6 L5.4 10 L5 7.2 Z" fill="#c27a62"/><path d="M4.6 6.6 Q3.6 1 9.4 0.4 Q15.4 0.2 15.2 7.6 L14.4 8.8 L13.4 5.4 Q12.6 3.4 9.4 3.4 Q6.6 3 5.4 5 Z" fill="#1f1612"/><path d="M4.2 6.3 L9 7 L14 8.4" fill="none" stroke="#54484a" stroke-width="0.85"/><path d="M5.4 7.3 h3 v1.2 h-3 Z M9.8 8 h3 v1.2 h-3 Z" fill="#c79a88" opacity="0.7"/><path d="M7.7 11.3 Q9.3 12 10.8 11.3 Q9.6 13.2 8.2 12.6 Z" fill="#fbeee8"/><path d="M7.2 11.1 Q9.2 11.8 11.2 11" fill="none" stroke="#a8564a" stroke-width="0.5"/></g></g></svg></div>
<span class="t " style="left:1342.00px;top:690.65px;font-size:15.3px;color:#07090b;letter-spacing:0.028px;">Mitchell Admin</span>
<div class="b" style="left:0px;top:756px;width:1568px;height:1px;background:#bbd5e1;"></div>
<div class="b" style="left:20px;top:731px;width:15px;height:15px"><svg viewBox="0 0 15 15" width="15" height="15"><rect width="15" height="15" rx="3.6" fill="#7b3a80"/><path d="M4.2 7.6 L6.8 10.0 L11.4 5.2" fill="none" stroke="#fff" stroke-width="1.9"/></svg></div>
<span class="t " style="left:61.90px;top:729.15px;font-size:15.3px;color:#07090b;letter-spacing:-0.026px;">duong shop/0019</span>
<span class="t " style="left:371.60px;top:729.15px;font-size:15.3px;color:#07090b;letter-spacing:-0.389px;">POS/00002</span>
<span class="t " style="left:498.70px;top:729.15px;font-size:15.3px;color:#07090b;letter-spacing:0.023px;">08/10/2024 13:38:18</span>
<span class="t " style="left:722.00px;top:729.15px;font-size:15.3px;color:#07090b;letter-spacing:-0.324px;">Order 00002-009-0003</span>
<div class="b" style="left:1318px;top:729px;width:19px;height:19px"><svg viewBox="0 0 19 19" width="19" height="19"><defs><clipPath id="c14"><circle cx="9.5" cy="9.5" r="9.4"/></clipPath><filter id="f14" x="-10%" y="-10%" width="120%" height="120%"><feGaussianBlur stdDeviation="0.45"/></filter></defs><g clip-path="url(#c14)"><rect width="19" height="19" fill="#a88d5c"/><g filter="url(#f14)"><path d="M0 6 H5 M0 8.6 H4.5 M0 11.2 H5 M0 13.8 H5.5 M13.5 7 H19 M14 9.6 H19 M13.8 12.2 H19 M13 14.8 H19" stroke="#8c7143" stroke-width="0.8"/><path d="M0.5 7 Q1.5 1.5 6 0.5 L7 5 L4.2 8 Z" fill="#6a4a26"/><path d="M3 19 Q3.5 14.8 7 14 L12 14.5 L10.5 19 Z" fill="#7a5238"/><path d="M10.2 19 L11.6 15 Q15 15 16.6 17.4 L15 19 Z" fill="#8b8f97"/><path d="M6.6 12 L6.3 16.5 L11.4 16.2 L11.6 12 Z" fill="#c98f76"/><path d="M4.9 6.2 Q4.6 3 7.6 2.6 Q12.4 2.2 13.6 5.2 Q14.2 8.5 12.9 11.6 Q11.4 14.6 9.2 14.7 Q6.6 14.4 5.6 11.4 Z" fill="#dfae97"/><path d="M6.3 3.6 Q9 2.6 12 4.2 L11.8 6 Q9 4.6 6 5.8 Z" fill="#f0d3c4"/><path d="M3.9 7.4 Q3.4 9.2 4.6 10.6 L5.4 10 L5 7.2 Z" fill="#c27a62"/><path d="M4.6 6.6 Q3.6 1 9.4 0.4 Q15.4 0.2 15.2 7.6 L14.4 8.8 L13.4 5.4 Q12.6 3.4 9.4 3.4 Q6.6 3 5.4 5 Z" fill="#1f1612"/><path d="M4.2 6.3 L9 7 L14 8.4" fill="none" stroke="#54484a" stroke-width="0.85"/><path d="M5.4 7.3 h3 v1.2 h-3 Z M9.8 8 h3 v1.2 h-3 Z" fill="#c79a88" opacity="0.7"/><path d="M7.7 11.3 Q9.3 12 10.8 11.3 Q9.6 13.2 8.2 12.6 Z" fill="#fbeee8"/><path d="M7.2 11.1 Q9.2 11.8 11.2 11" fill="none" stroke="#a8564a" stroke-width="0.5"/></g></g></svg></div>
<span class="t " style="left:1342.00px;top:729.15px;font-size:15.3px;color:#07090b;letter-spacing:0.028px;">Mitchell Admin</span>
<div class="b" style="left:0px;top:795px;width:1568px;height:1px;background:#bbd5e1;"></div>
<div class="b" style="left:20px;top:770px;width:15px;height:15px"><svg viewBox="0 0 15 15" width="15" height="15"><rect width="15" height="15" rx="3.6" fill="#7b3a80"/><path d="M4.2 7.6 L6.8 10.0 L11.4 5.2" fill="none" stroke="#fff" stroke-width="1.9"/></svg></div>
<span class="t " style="left:61.90px;top:767.65px;font-size:15.3px;color:#07090b;letter-spacing:-0.026px;">duong shop/0018</span>
<span class="t " style="left:371.60px;top:767.65px;font-size:15.3px;color:#07090b;letter-spacing:-0.389px;">POS/00002</span>
<span class="t " style="left:498.70px;top:767.65px;font-size:15.3px;color:#07090b;letter-spacing:0.023px;">08/10/2024 13:38:12</span>
<span class="t " style="left:722.00px;top:767.65px;font-size:15.3px;color:#07090b;letter-spacing:-0.324px;">Order 00002-009-0002</span>
<div class="b" style="left:1318px;top:767px;width:19px;height:19px"><svg viewBox="0 0 19 19" width="19" height="19"><defs><clipPath id="c15"><circle cx="9.5" cy="9.5" r="9.4"/></clipPath><filter id="f15" x="-10%" y="-10%" width="120%" height="120%"><feGaussianBlur stdDeviation="0.45"/></filter></defs><g clip-path="url(#c15)"><rect width="19" height="19" fill="#a88d5c"/><g filter="url(#f15)"><path d="M0 6 H5 M0 8.6 H4.5 M0 11.2 H5 M0 13.8 H5.5 M13.5 7 H19 M14 9.6 H19 M13.8 12.2 H19 M13 14.8 H19" stroke="#8c7143" stroke-width="0.8"/><path d="M0.5 7 Q1.5 1.5 6 0.5 L7 5 L4.2 8 Z" fill="#6a4a26"/><path d="M3 19 Q3.5 14.8 7 14 L12 14.5 L10.5 19 Z" fill="#7a5238"/><path d="M10.2 19 L11.6 15 Q15 15 16.6 17.4 L15 19 Z" fill="#8b8f97"/><path d="M6.6 12 L6.3 16.5 L11.4 16.2 L11.6 12 Z" fill="#c98f76"/><path d="M4.9 6.2 Q4.6 3 7.6 2.6 Q12.4 2.2 13.6 5.2 Q14.2 8.5 12.9 11.6 Q11.4 14.6 9.2 14.7 Q6.6 14.4 5.6 11.4 Z" fill="#dfae97"/><path d="M6.3 3.6 Q9 2.6 12 4.2 L11.8 6 Q9 4.6 6 5.8 Z" fill="#f0d3c4"/><path d="M3.9 7.4 Q3.4 9.2 4.6 10.6 L5.4 10 L5 7.2 Z" fill="#c27a62"/><path d="M4.6 6.6 Q3.6 1 9.4 0.4 Q15.4 0.2 15.2 7.6 L14.4 8.8 L13.4 5.4 Q12.6 3.4 9.4 3.4 Q6.6 3 5.4 5 Z" fill="#1f1612"/><path d="M4.2 6.3 L9 7 L14 8.4" fill="none" stroke="#54484a" stroke-width="0.85"/><path d="M5.4 7.3 h3 v1.2 h-3 Z M9.8 8 h3 v1.2 h-3 Z" fill="#c79a88" opacity="0.7"/><path d="M7.7 11.3 Q9.3 12 10.8 11.3 Q9.6 13.2 8.2 12.6 Z" fill="#fbeee8"/><path d="M7.2 11.1 Q9.2 11.8 11.2 11" fill="none" stroke="#a8564a" stroke-width="0.5"/></g></g></svg></div>
<span class="t " style="left:1342.00px;top:767.65px;font-size:15.3px;color:#07090b;letter-spacing:0.028px;">Mitchell Admin</span>
<div class="b" style="left:0px;top:833px;width:1568px;height:1px;background:#bbd5e1;"></div>
<div class="b" style="left:20px;top:808px;width:15px;height:15px"><svg viewBox="0 0 15 15" width="15" height="15"><rect width="15" height="15" rx="3.6" fill="#7b3a80"/><path d="M4.2 7.6 L6.8 10.0 L11.4 5.2" fill="none" stroke="#fff" stroke-width="1.9"/></svg></div>
<span class="t " style="left:61.90px;top:806.15px;font-size:15.3px;color:#07090b;letter-spacing:-0.026px;">duong shop/0017</span>
<span class="t " style="left:371.60px;top:806.15px;font-size:15.3px;color:#07090b;letter-spacing:-0.389px;">POS/00002</span>
<span class="t " style="left:498.70px;top:806.15px;font-size:15.3px;color:#07090b;letter-spacing:0.023px;">08/10/2024 13:37:36</span>
<span class="t " style="left:722.00px;top:806.15px;font-size:15.3px;color:#07090b;letter-spacing:-0.324px;">Order 00002-009-0001</span>
<span class="t " style="left:987.00px;top:806.15px;font-size:15.3px;color:#07090b;letter-spacing:-0.180px;">Azure Interior</span>
<div class="b" style="left:1318px;top:806px;width:19px;height:19px"><svg viewBox="0 0 19 19" width="19" height="19"><defs><clipPath id="c16"><circle cx="9.5" cy="9.5" r="9.4"/></clipPath><filter id="f16" x="-10%" y="-10%" width="120%" height="120%"><feGaussianBlur stdDeviation="0.45"/></filter></defs><g clip-path="url(#c16)"><rect width="19" height="19" fill="#a88d5c"/><g filter="url(#f16)"><path d="M0 6 H5 M0 8.6 H4.5 M0 11.2 H5 M0 13.8 H5.5 M13.5 7 H19 M14 9.6 H19 M13.8 12.2 H19 M13 14.8 H19" stroke="#8c7143" stroke-width="0.8"/><path d="M0.5 7 Q1.5 1.5 6 0.5 L7 5 L4.2 8 Z" fill="#6a4a26"/><path d="M3 19 Q3.5 14.8 7 14 L12 14.5 L10.5 19 Z" fill="#7a5238"/><path d="M10.2 19 L11.6 15 Q15 15 16.6 17.4 L15 19 Z" fill="#8b8f97"/><path d="M6.6 12 L6.3 16.5 L11.4 16.2 L11.6 12 Z" fill="#c98f76"/><path d="M4.9 6.2 Q4.6 3 7.6 2.6 Q12.4 2.2 13.6 5.2 Q14.2 8.5 12.9 11.6 Q11.4 14.6 9.2 14.7 Q6.6 14.4 5.6 11.4 Z" fill="#dfae97"/><path d="M6.3 3.6 Q9 2.6 12 4.2 L11.8 6 Q9 4.6 6 5.8 Z" fill="#f0d3c4"/><path d="M3.9 7.4 Q3.4 9.2 4.6 10.6 L5.4 10 L5 7.2 Z" fill="#c27a62"/><path d="M4.6 6.6 Q3.6 1 9.4 0.4 Q15.4 0.2 15.2 7.6 L14.4 8.8 L13.4 5.4 Q12.6 3.4 9.4 3.4 Q6.6 3 5.4 5 Z" fill="#1f1612"/><path d="M4.2 6.3 L9 7 L14 8.4" fill="none" stroke="#54484a" stroke-width="0.85"/><path d="M5.4 7.3 h3 v1.2 h-3 Z M9.8 8 h3 v1.2 h-3 Z" fill="#c79a88" opacity="0.7"/><path d="M7.7 11.3 Q9.3 12 10.8 11.3 Q9.6 13.2 8.2 12.6 Z" fill="#fbeee8"/><path d="M7.2 11.1 Q9.2 11.8 11.2 11" fill="none" stroke="#a8564a" stroke-width="0.5"/></g></g></svg></div>
<span class="t " style="left:1342.00px;top:806.15px;font-size:15.3px;color:#07090b;letter-spacing:0.028px;">Mitchell Admin</span>
<div class="b" style="left:0px;top:872px;width:1568px;height:1px;background:#bbd5e1;"></div>
<div class="b" style="left:20px;top:847px;width:15px;height:15px"><svg viewBox="0 0 15 15" width="15" height="15"><rect width="15" height="15" rx="3.6" fill="#7b3a80"/><path d="M4.2 7.6 L6.8 10.0 L11.4 5.2" fill="none" stroke="#fff" stroke-width="1.9"/></svg></div>
<span class="t " style="left:61.90px;top:844.65px;font-size:15.3px;color:#07090b;letter-spacing:-0.026px;">duong shop/0016</span>
<span class="t " style="left:371.60px;top:844.65px;font-size:15.3px;color:#07090b;letter-spacing:-0.389px;">POS/00002</span>
<span class="t " style="left:498.70px;top:844.65px;font-size:15.3px;color:#07090b;letter-spacing:0.023px;">08/10/2024 13:24:24</span>
<span class="t " style="left:722.00px;top:844.65px;font-size:15.3px;color:#07090b;letter-spacing:-0.324px;">Order 00002-008-0002</span>
<span class="t " style="left:987.00px;top:844.65px;font-size:15.3px;color:#07090b;letter-spacing:-0.336px;">VN Company, Retail Customer</span>
<div class="b" style="left:1318px;top:844px;width:19px;height:19px"><svg viewBox="0 0 19 19" width="19" height="19"><defs><clipPath id="c17"><circle cx="9.5" cy="9.5" r="9.4"/></clipPath><filter id="f17" x="-10%" y="-10%" width="120%" height="120%"><feGaussianBlur stdDeviation="0.45"/></filter></defs><g clip-path="url(#c17)"><rect width="19" height="19" fill="#a88d5c"/><g filter="url(#f17)"><path d="M0 6 H5 M0 8.6 H4.5 M0 11.2 H5 M0 13.8 H5.5 M13.5 7 H19 M14 9.6 H19 M13.8 12.2 H19 M13 14.8 H19" stroke="#8c7143" stroke-width="0.8"/><path d="M0.5 7 Q1.5 1.5 6 0.5 L7 5 L4.2 8 Z" fill="#6a4a26"/><path d="M3 19 Q3.5 14.8 7 14 L12 14.5 L10.5 19 Z" fill="#7a5238"/><path d="M10.2 19 L11.6 15 Q15 15 16.6 17.4 L15 19 Z" fill="#8b8f97"/><path d="M6.6 12 L6.3 16.5 L11.4 16.2 L11.6 12 Z" fill="#c98f76"/><path d="M4.9 6.2 Q4.6 3 7.6 2.6 Q12.4 2.2 13.6 5.2 Q14.2 8.5 12.9 11.6 Q11.4 14.6 9.2 14.7 Q6.6 14.4 5.6 11.4 Z" fill="#dfae97"/><path d="M6.3 3.6 Q9 2.6 12 4.2 L11.8 6 Q9 4.6 6 5.8 Z" fill="#f0d3c4"/><path d="M3.9 7.4 Q3.4 9.2 4.6 10.6 L5.4 10 L5 7.2 Z" fill="#c27a62"/><path d="M4.6 6.6 Q3.6 1 9.4 0.4 Q15.4 0.2 15.2 7.6 L14.4 8.8 L13.4 5.4 Q12.6 3.4 9.4 3.4 Q6.6 3 5.4 5 Z" fill="#1f1612"/><path d="M4.2 6.3 L9 7 L14 8.4" fill="none" stroke="#54484a" stroke-width="0.85"/><path d="M5.4 7.3 h3 v1.2 h-3 Z M9.8 8 h3 v1.2 h-3 Z" fill="#c79a88" opacity="0.7"/><path d="M7.7 11.3 Q9.3 12 10.8 11.3 Q9.6 13.2 8.2 12.6 Z" fill="#fbeee8"/><path d="M7.2 11.1 Q9.2 11.8 11.2 11" fill="none" stroke="#a8564a" stroke-width="0.5"/></g></g></svg></div>
<span class="t " style="left:1342.00px;top:844.65px;font-size:15.3px;color:#07090b;letter-spacing:0.028px;">Mitchell Admin</span>
<div class="b" style="left:775px;top:120px;width:150px;height:101.5px;background:#fff;border:1px solid #dcdfe3;box-sizing:border-box;box-shadow:0 6px 14px rgba(0,0,0,.16);"></div>
<div class="b" style="left:776px;top:185px;width:148px;height:29.2px;background:#eaeaea;"></div>
<span class="t " style="left:795.80px;top:133.45px;font-size:15.3px;color:#4b4f54;letter-spacing:-0.525px;">Xuất</span>
<span class="t " style="left:795.80px;top:162.45px;font-size:15.3px;color:#4b4f54;letter-spacing:-0.912px;">Xoá</span>
<span class="t " style="left:795.80px;top:190.35px;font-size:15.3px;color:#33373b;letter-spacing:-0.515px;">Tạo hóa đơn</span>
<div class="b" style="left:0px;top:0px;width:3.8px;height:915px;background:#111;"></div>
<svg class="b" style="left:0;top:0" width="1568" height="915" viewBox="0 0 1568 915"><rect x="777.15" y="182.1" width="139.75" height="35.45" fill="none" stroke="#ff0000" stroke-width="3.3"/></svg>
<svg class="b" style="left:0;top:0" width="1568" height="915" viewBox="0 0 1568 915"><rect x="3.9" y="122.05" width="253.10" height="775.95" fill="none" stroke="#ff0000" stroke-width="3.3"/></svg>
</body></html>
